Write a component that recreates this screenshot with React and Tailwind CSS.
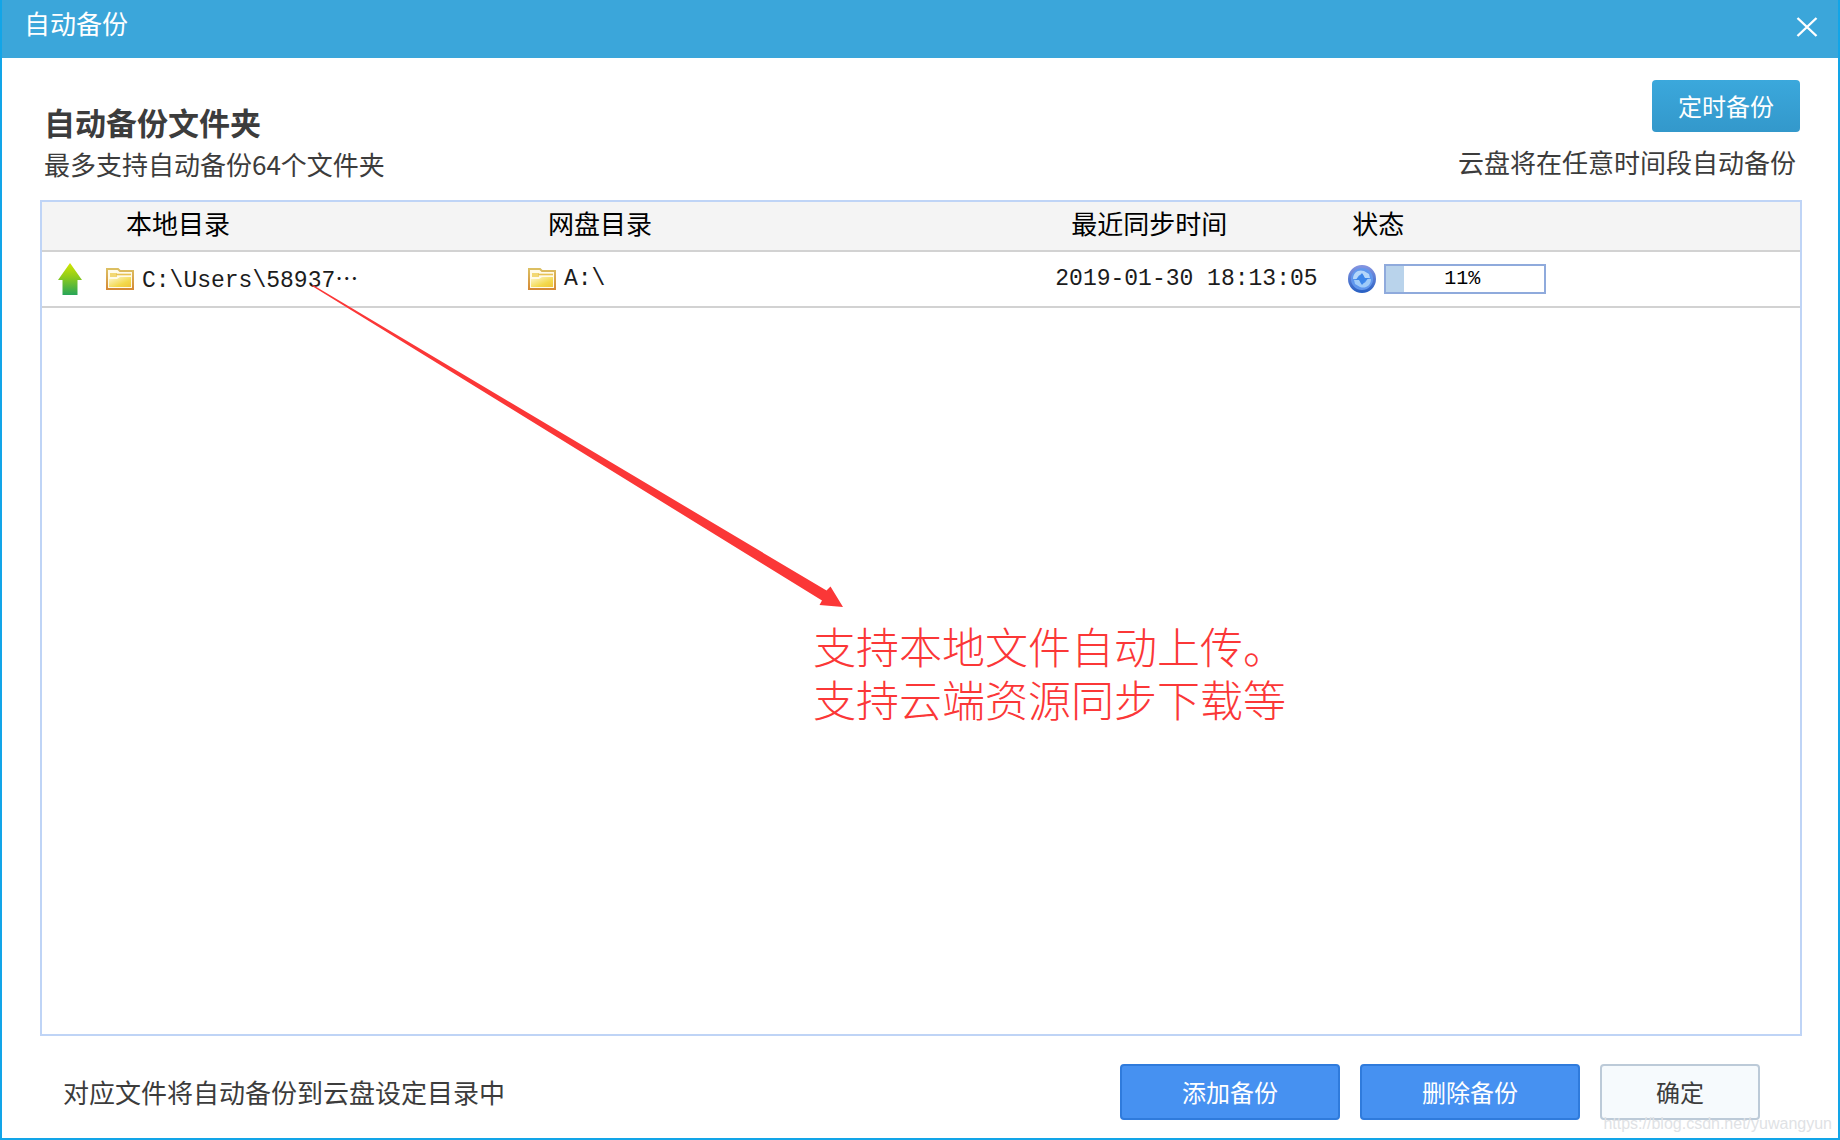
import { useState } from 'react';

const backups = [
  {
    id: 1,
    local: 'C:\\Users\\58937',
    remote: 'A:\\',
    syncedAt: '2019-01-30 18:13:05',
    progress: 11,
  },
];

const CloseIcon = () => (
  <svg width="22" height="20" viewBox="0 0 22 20" fill="none" stroke="#fff" strokeWidth="2.4">
    <path d="M1.5 1 20.5 19M20.5 1 1.5 19" />
  </svg>
);

const UploadIcon = () => (
  <svg width="24" height="32" viewBox="0 0 24 32" className="block">
    <defs>
      <linearGradient id="upload" x1="0" y1="0" x2="0" y2="1">
        <stop offset="0" stopColor="#d3e600" />
        <stop offset="0.45" stopColor="#8ccb1c" />
        <stop offset="1" stopColor="#27a558" />
      </linearGradient>
    </defs>
    <path d="M12 0 24 17H19.500V32H4.500V17H0Z" fill="url(#upload)" />
  </svg>
);

const FolderIcon = () => (
  <svg width="28" height="22" viewBox="0 0 28 22" className="block shrink-0">
    <defs>
      <linearGradient id="folderEdge" x1="0" y1="0" x2="0" y2="1">
        <stop offset="0" stopColor="#dcbf62" />
        <stop offset="1" stopColor="#d58a35" />
      </linearGradient>
      <linearGradient id="folderFront" x1="0" y1="0" x2="1" y2="1">
        <stop offset="0" stopColor="#fdf8d2" />
        <stop offset="0.65" stopColor="#f3d94c" />
        <stop offset="1" stopColor="#f0c63c" />
      </linearGradient>
    </defs>
    <path d="M1 1H12L14 3H27V21H1Z" fill="#fffbe9" stroke="url(#folderEdge)" strokeWidth="2" />
    <path d="M4 5H11V9H4Z" fill="#f2d873" />
    <path d="M10 6.500H25" stroke="#e8c355" strokeWidth="1.6" />
    <path d="M3 11H11L14 9H25V19H3Z" fill="url(#folderFront)" />
  </svg>
);

const SyncIcon = () => (
  <svg width="28" height="28" viewBox="0 0 28 28" className="block shrink-0">
    <defs>
      <linearGradient id="syncRing" x1="0" y1="0" x2="0" y2="1">
        <stop offset="0" stopColor="#8293e0" />
        <stop offset="1" stopColor="#2b62c4" />
      </linearGradient>
      <radialGradient id="syncFill" cx="0.5" cy="0.5" r="0.55">
        <stop offset="0" stopColor="#3d8bf0" />
        <stop offset="1" stopColor="#6f9cec" />
      </radialGradient>
    </defs>
    <circle cx="14" cy="14" r="12.500" fill="url(#syncFill)" stroke="url(#syncRing)" strokeWidth="3" />
    <path d="M5 14C5 7 11 4 16 6L21 9 22 13H16L15 9.500C12 9 9.500 11 9 14Z" fill="#b4d6fa" />
    <path d="M23 14C23 21 17 24 12 22L7 19 6 15H12L13 18.500C16 19 18.500 17 19 14Z" fill="#9fcbf9" />
    <path d="M14 8 17 13H21L17 16 14 20 11 15H7L11 12Z" fill="#3c86ea" />
  </svg>
);

const ProgressBar = ({ value }) => (
  <div
    role="progressbar"
    aria-label="状态"
    aria-valuenow={value}
    aria-valuemin={0}
    aria-valuemax={100}
    className="relative h-[30px] w-[162px] border-2 border-[#8faadc] bg-white"
  >
    <div className="h-full bg-[#b9d3eb]" style={{ width: `${value}%` }} />
    <span className="absolute inset-0 flex items-center justify-center pr-1.5 font-['Liberation_Mono',monospace] text-xl text-black">
      {value}%
    </span>
  </div>
);

const App = () => {
  const [rows] = useState(backups);

  return (
    <div
      lang="zh-CN"
      className="relative flex min-h-screen flex-col border-x-2 border-b-2 border-[#12a5e8] bg-white font-['Noto_Sans_CJK_SC',sans-serif] text-[26px] text-[#3c3c3c]"
    >
      <header className="flex h-[58px] items-center justify-between bg-[#3ba6da] pr-5 pb-2 pl-[22px] text-white">
        <h1 className="pb-1 leading-9 font-normal">自动备份</h1>
        <button type="button" aria-label="关闭" className="pt-1">
          <CloseIcon />
        </button>
      </header>

      <main className="flex flex-1 flex-col pr-9 pl-[38px]">
        <div className="flex justify-between pt-[22px] pb-4">
          <div className="pt-5 pl-1">
            <h2 className="text-[31px] leading-11 font-bold">自动备份文件夹</h2>
            <p className="leading-10">最多支持自动备份64个文件夹</p>
          </div>
          <div className="flex flex-col items-end">
            <button
              type="button"
              className="mr-0.5 h-[52px] w-[148px] rounded bg-linear-to-b from-[#3ba8dc] to-[#3398cb] text-2xl text-white"
            >
              定时备份
            </button>
            <p className="mt-3 pr-1.5 leading-9">云盘将在任意时间段自动备份</p>
          </div>
        </div>

        <section className="relative flex-1 border-2 border-[#bfd4f6]">
          <table className="w-full table-fixed text-left text-black">
            <thead>
              <tr className="h-[49px] border-b-2 border-[#d2d2d2] bg-[#f4f4f4] leading-9">
                <th className="w-16" aria-label="同步方向" />
                <th className="w-[24%] pb-1.5 pl-5 font-normal">本地目录</th>
                <th className="w-[30%] pb-1.5 pl-5 font-normal">网盘目录</th>
                <th className="w-[293px] pb-1.5 pl-4 font-normal">最近同步时间</th>
                <th className="pb-1.5 pl-1 font-normal">状态</th>
              </tr>
            </thead>
            <tbody className="font-['Liberation_Mono','Noto_Sans_CJK_SC',monospace] text-[23px] leading-8 text-[#1c1c1c]">
              {rows.map((row) => (
                <tr key={row.id} className="h-14 border-b-2 border-[#d2d2d2]">
                  <td className="pl-4">
                    <UploadIcon />
                  </td>
                  <td>
                    <div className="flex items-center gap-2">
                      <FolderIcon />
                      <span className="whitespace-nowrap">
                        {row.local}
                        <span className="font-['Noto_Sans_CJK_SC',sans-serif]">…</span>
                      </span>
                    </div>
                  </td>
                  <td>
                    <div className="flex items-center gap-2">
                      <FolderIcon />
                      <span>{row.remote}</span>
                    </div>
                  </td>
                  <td className="whitespace-nowrap">{row.syncedAt}</td>
                  <td>
                    <div className="flex items-center gap-2">
                      <SyncIcon />
                      <ProgressBar value={row.progress} />
                    </div>
                  </td>
                </tr>
              ))}
            </tbody>
          </table>

          {/* Callout over the list */}
          <svg
            width="532"
            height="323"
            viewBox="0 0 532 323"
            className="pointer-events-none absolute top-[83px] left-[270px]"
            aria-hidden="true"
          >
            <path d="M1 0 514.500 305.500 518.500 301.500 531 322 507.500 320 510 315.500 0 1Z" fill="#fb3737" />
          </svg>
          <p className="absolute top-[421px] left-[771px] font-['Liberation_Serif','Noto_Sans_CJK_SC',sans-serif] text-[43px] leading-[53px] font-light whitespace-nowrap text-[#fb3737]">
            支持本地文件自动上传。
            <br />
            支持云端资源同步下载等
          </p>
        </section>
      </main>

      <footer className="flex items-center justify-between pt-7 pr-[78px] pb-[18px] pl-[61px]">
        <p className="leading-9">对应文件将自动备份到云盘设定目录中</p>
        <div className="flex gap-5 text-2xl">
          <button type="button" className="h-14 w-[220px] rounded-sm border-2 border-[#2f7bdc] bg-[#4691f1] text-white">
            添加备份
          </button>
          <button type="button" className="h-14 w-[220px] rounded-sm border-2 border-[#2f7bdc] bg-[#4691f1] text-white">
            删除备份
          </button>
          <button type="button" className="h-14 w-40 rounded-sm border-2 border-[#bccad8] bg-[#f6fafd]">
            确定
          </button>
        </div>
      </footer>

      <span className="pointer-events-none absolute right-1.5 bottom-1 font-['Liberation_Sans',sans-serif] text-base leading-5 text-[#e0e2e5]">
        https://blog.csdn.net/yuwangyun
      </span>
    </div>
  );
};

export default App;
